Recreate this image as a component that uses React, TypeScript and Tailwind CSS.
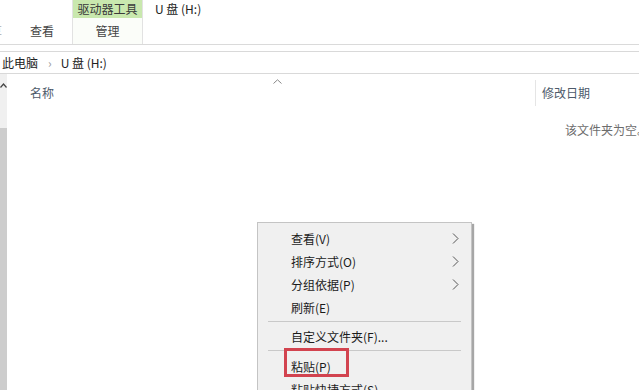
import React from "react";

const font = { fontFamily: '"Noto Sans CJK SC", "Noto Sans", sans-serif' };

function Chevron() {
  return (
    <svg width="7" height="11" viewBox="0 0 7 11" className="shrink-0">
      <path d="M1 0.5 L6 5.5 L1 10.5" fill="none" stroke="#555" strokeWidth="1" />
    </svg>
  );
}

function Item({ label, sub, extra }: { label: string; sub?: boolean; extra?: string }) {
  return (
    <div className={`flex h-[23px] items-center pl-[33px] pr-[12px] text-[12px] leading-none text-[#1b1b1b] ${extra ?? ""}`}>
      <span className="flex-1">{label}</span>
      {sub && <Chevron />}
    </div>
  );
}

function Sep({ top, bottom }: { top: string; bottom: string }) {
  return <div className={`ml-[10px] mr-[10px] h-px bg-[#c9c9c9] ${top} ${bottom}`} />;
}

export default function App() {
  return (
    <div className="relative flex h-[390px] w-[639px] flex-col overflow-hidden bg-white" style={font}>
      {/* Ribbon */}
      <div className="flex h-[45px] shrink-0 border-b border-[#dadada] text-[12px] leading-none">
        <div className="flex w-[72px] flex-col">
          <div className="h-[18px]" />
          <div className="flex h-[26px] items-center overflow-hidden text-[#444]">
            <span className="ml-[-10px] w-[12px] text-[#aaa]">享</span>
            <span className="ml-[28px]">查看</span>
          </div>
        </div>
        <div className="flex w-[71px] flex-col border-x border-[#e2e2e2]">
          <div className="flex h-[18px] items-center justify-center bg-[#c9e8ae] text-[#3a3a3a]">驱动器工具</div>
          <div className="flex h-[26px] items-center justify-center bg-[#fbfdf9] text-[#444]">管理</div>
        </div>
        <div className="flex flex-col">
          <div className="flex h-[18px] items-center pl-[12px] text-[#222]">U 盘 (H:)</div>
        </div>
      </div>

      {/* Address bar */}
      <div className="mt-[6px] flex h-[23px] shrink-0 items-center border-y border-[#d9d9d9] pl-[2px] text-[12px] leading-none text-[#222]">
        <span>此电脑</span>
        <span className="ml-[10px] mr-[9px] text-[#999]">›</span>
        <span>U 盘 (H:)</span>
      </div>

      {/* Content */}
      <div className="flex flex-1">
        <div className="flex w-[10px] flex-col">
          <div className="flex h-[54px] justify-center bg-[#f0f0f0] pt-[9px]">
            <svg width="7" height="5" viewBox="0 0 7 5">
              <path d="M0.5 4.5 L3.5 1 L6.5 4.5" fill="none" stroke="#444" strokeWidth="1.2" />
            </svg>
          </div>
          <div className="flex-1 bg-[#cdcdcd]" />
        </div>
        <div className="ml-[2px] w-px bg-[#efefef]" />
        <div className="relative flex flex-1 flex-col">
          <div className="flex h-[32px] items-end">
            <div className="relative flex h-[26px] w-[526px] items-center pl-[21px] text-[12px] leading-none text-[#4d5a6a]">
              名称
              <svg className="absolute left-[264px] top-[-1px]" width="9" height="5" viewBox="0 0 9 5">
                <path d="M0.5 4.5 L4.5 0.8 L8.5 4.5" fill="none" stroke="#888" strokeWidth="1" />
              </svg>
            </div>
            <div className="flex h-[26px] items-center border-l border-[#e5e5e5] pl-[6px] text-[12px] leading-none text-[#4d5a6a]">
              修改日期
            </div>
          </div>
          <div className="mt-[18px] whitespace-nowrap pl-[556px] text-[12px] leading-none text-[#6d6d6d]">该文件夹为空。</div>
        </div>
      </div>

      {/* Context menu */}
      <div className="absolute left-[257px] top-[222px] w-[215px] border border-[#c4c4c4] bg-[#f0f0f0] pt-[4px] shadow-[2px_2px_1px_rgba(0,0,0,0.35)]">
        <Item label="查看(V)" sub />
        <Item label="排序方式(O)" sub />
        <Item label="分组依据(P)" sub />
        <Item label="刷新(E)" />
        <Sep top="mt-[2px]" bottom="mb-[3px]" />
        <Item label="自定义文件夹(F)..." />
        <Sep top="mt-[2px]" bottom="mb-[4px]" />
        <Item label="粘贴(P)" />
        <Item label="粘贴快捷方式(S)" />
        <div className="absolute left-[26px] top-[125px] h-[29px] w-[65px] border-[3px] border-[#d2434f]" />
      </div>
    </div>
  );
}
